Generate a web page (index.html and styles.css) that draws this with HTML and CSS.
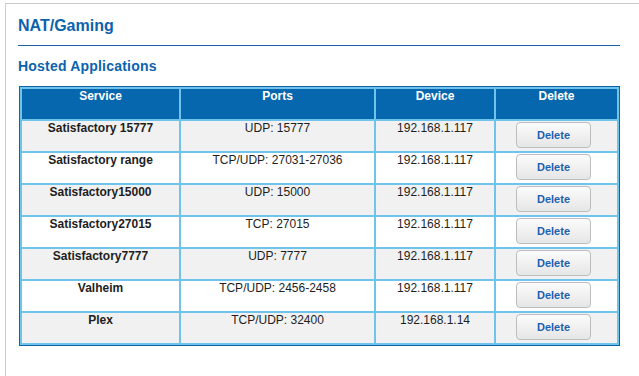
FILE: index.html
```html
<!DOCTYPE html>
<html>
<head>
<meta charset="utf-8">
<link rel="stylesheet" href="styles.css">
</head>
<body>
<div class="panel">
  <h1 class="title">NAT/Gaming</h1>
  <hr class="rule">
  <h2 class="subtitle">Hosted Applications</h2>
  <table class="apps">
    <thead>
      <tr>
        <th class="c-service">Service</th>
        <th class="c-ports">Ports</th>
        <th class="c-device">Device</th>
        <th class="c-delete">Delete</th>
      </tr>
    </thead>
    <tbody>
      <tr class="odd"><td class="name">Satisfactory 15777</td><td>UDP: 15777</td><td>192.168.1.117</td><td class="act"><button class="del">Delete</button></td></tr>
      <tr class="even"><td class="name">Satisfactory range</td><td>TCP/UDP: 27031-27036</td><td>192.168.1.117</td><td class="act"><button class="del">Delete</button></td></tr>
      <tr class="odd"><td class="name">Satisfactory15000</td><td>UDP: 15000</td><td>192.168.1.117</td><td class="act"><button class="del">Delete</button></td></tr>
      <tr class="even"><td class="name">Satisfactory27015</td><td>TCP: 27015</td><td>192.168.1.117</td><td class="act"><button class="del">Delete</button></td></tr>
      <tr class="odd"><td class="name">Satisfactory7777</td><td>UDP: 7777</td><td>192.168.1.117</td><td class="act"><button class="del">Delete</button></td></tr>
      <tr class="even"><td class="name">Valheim</td><td>TCP/UDP: 2456-2458</td><td>192.168.1.117</td><td class="act"><button class="del">Delete</button></td></tr>
      <tr class="odd"><td class="name">Plex</td><td>TCP/UDP: 32400</td><td>192.168.1.14</td><td class="act"><button class="del">Delete</button></td></tr>
    </tbody>
  </table>
</div>
</body>
</html>
```
FILE: styles.css
```css
html, body {
  margin: 0;
  padding: 0;
  background: #ffffff;
  font-family: "Liberation Sans", Arial, sans-serif;
}
body {
  height: 376px;
  overflow: hidden;
}
.panel {
  margin: 3px 0 0 5px;
  border-top: 1px solid #cccccc;
  border-left: 1px solid #cccccc;
  padding: 12px 19px 0 12px;
  height: 373px;
  box-sizing: border-box;
}
.title {
  margin: 0;
  font-size: 16px;
  line-height: 18px;
  font-weight: bold;
  color: #0b63ae;
  padding-top: 1px;
}
.rule {
  margin: 10px 0 0 0;
  border: 0;
  height: 1px;
  background: #1b62a4;
}
.subtitle {
  margin: 12px 0 0 0;
  font-size: 14px;
  line-height: 16px;
  font-weight: bold;
  color: #0b63ae;
  letter-spacing: 0.2px;
}
.apps {
  margin: 12px 0 0 1px;
  width: calc(100% - 1px);
  table-layout: fixed;
  border-collapse: separate;
  border-spacing: 2px;
  background: #70c3ea;
  border: 1px solid #0f62a8;
  font-size: 12px;
  line-height: 14px;
  color: #1e1e1e;
}
.apps th {
  background: #0767ae;
  color: #ffffff;
  font-weight: bold;
  height: 30px;
  padding: 0;
  vertical-align: top;
  text-align: center;
}
.c-service { width: 157px; }
.c-ports { width: 193px; }
.c-device { width: 118px; }
.c-delete { width: 121px; }
.apps td {
  height: 30px;
  padding: 0;
  vertical-align: top;
  text-align: center;
}
.apps tr.odd td { background: #f1f1f1; }
.apps tr.even td { background: #ffffff; }
.apps td.name { font-weight: bold; }
.apps td.act { text-align: left; }
.del {
  display: block;
  margin: 1px 0 0 20px;
  width: 75px;
  height: 26px;
  padding: 0;
  border: 1px solid #bdbdbd;
  border-radius: 4px;
  background: linear-gradient(#fbfbfb, #e6e6e6);
  font-family: "Liberation Sans", Arial, sans-serif;
  font-size: 11px;
  font-weight: bold;
  color: #1c5fb0;
  line-height: 24px;
  text-align: center;
}
```
